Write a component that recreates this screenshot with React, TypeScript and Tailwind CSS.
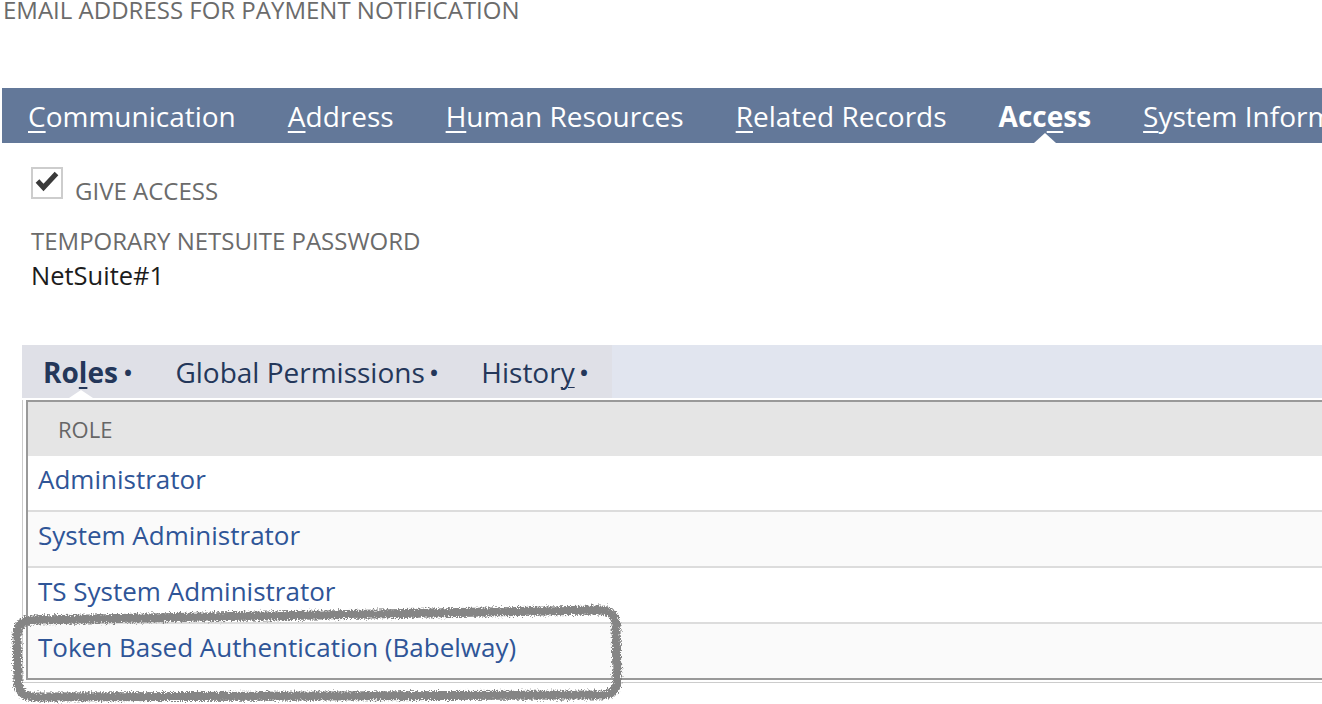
import React from "react";

const tabs: { pre: string; u: string; post: string; bold?: boolean }[] = [
  { pre: "", u: "C", post: "ommunication" },
  { pre: "", u: "A", post: "ddress" },
  { pre: "", u: "H", post: "uman Resources" },
  { pre: "", u: "R", post: "elated Records" },
  { pre: "Acc", u: "e", post: "ss", bold: true },
  { pre: "", u: "S", post: "ystem Information" },
];

const roles = [
  "Administrator",
  "System Administrator",
  "TS System Administrator",
  "Token Based Authentication (Babelway)",
];

export default function App() {
  return (
    <div
      className="relative w-[1322px] h-[704px] overflow-hidden bg-white flex flex-col"
      style={{ fontFamily: '"Open Sans", "Liberation Sans", sans-serif' }}
    >
      <div className="h-[20px] leading-[20px] pl-[3px] text-[24px] text-[#6b6b6b] whitespace-nowrap">
        EMAIL ADDRESS FOR PAYMENT NOTIFICATION
      </div>

      {/* Main tab bar */}
      <div className="mt-[68px] ml-[2px] h-[55px] bg-[#637899] flex items-start pl-[26px] gap-[52px] whitespace-nowrap overflow-hidden shrink-0">
        {tabs.map((t, i) => (
          <div
            key={i}
            className={`relative h-[55px] pt-[1px] leading-[55px] text-[28px] text-white ${t.bold ? "font-bold" : "font-normal"}`}
          >
            {t.pre}
            <span className="underline decoration-2 underline-offset-[4px]">{t.u}</span>
            {t.post}
            {t.bold && (
              <span className="absolute bottom-0 left-1/2 -translate-x-1/2 w-0 h-0 border-l-[11px] border-r-[11px] border-b-[10px] border-l-transparent border-r-transparent border-b-white" />
            )}
          </div>
        ))}
      </div>

      {/* Give access */}
      <div className="mt-[24px] ml-[31px] flex items-start">
        <div className="w-[32px] h-[32px] border-2 border-[#cdcdcd] bg-white shrink-0">
          <svg width="28" height="28" viewBox="0 0 28 28">
            <path d="M4.5 12 L10.5 18.5 L23.5 4.5" fill="none" stroke="#3a3a3a" strokeWidth="5" strokeLinejoin="miter" />
          </svg>
        </div>
        <div className="ml-[12px] mt-[12px] h-[24px] leading-[24px] text-[24px] text-[#6b6b6b] whitespace-nowrap">
          GIVE ACCESS
        </div>
      </div>

      <div className="mt-[26px] ml-[31px] h-[24px] leading-[24px] text-[24px] text-[#6b6b6b] whitespace-nowrap">
        TEMPORARY NETSUITE PASSWORD
      </div>
      <div className="mt-[10px] ml-[31px] h-[25px] leading-[25px] text-[25.5px] text-[#1c1c1c] whitespace-nowrap">
        NetSuite#1
      </div>

      {/* Subtabs */}
      <div className="mt-[57px] ml-[22px] h-[53px] flex shrink-0 whitespace-nowrap">
        <div className="flex bg-[#dfe0e7] h-[53px] text-[28px] text-[#24375a] leading-[53px] pt-[1px] pr-[2px]">
          <div className="relative px-[21px] font-bold">
            Ro<span className="underline decoration-2 underline-offset-[4px]">l</span>es
            <span className="font-normal ml-[5px]">•</span>
            <span className="absolute bottom-0 left-[47px] w-0 h-0 border-l-[12px] border-r-[12px] border-b-[8px] border-l-transparent border-r-transparent border-b-white" />
          </div>
          <div className="px-[21px]">
            Global Permissions<span className="ml-[4px]">•</span>
          </div>
          <div className="px-[21px]">
            Histor<span className="underline decoration-1 underline-offset-[4px]">y</span>
            <span className="ml-[4px]">•</span>
          </div>
        </div>
        <div className="flex-1 bg-[#e1e5ef] h-[53px]" />
      </div>

      {/* Table */}
      <div className="mt-[2px] ml-[22px] border-l border-b border-[#cccccc] pl-[3px] pb-[2px] shrink-0">
        <div className="border-t-2 border-l-2 border-b-2 border-[#999999]">
          <div className="h-[54px] bg-[#e5e5e5] flex items-center pl-[30px] text-[22px] text-[#666666]">
            ROLE
          </div>
          {roles.map((r, i) => (
            <div
              key={r}
              className={`${i === 0 ? "h-[54px]" : "h-[56px] border-t-2 border-[#dcdcdc]"} ${i % 2 === 1 ? "bg-[#fafafa]" : "bg-white"} pl-[10px] pt-[8px]`}
            >
              <div className="h-[30px] leading-[30px] text-[26px] text-[#2f5597] whitespace-nowrap">{r}</div>
            </div>
          ))}
        </div>
      </div>

      {/* Hand-drawn annotation */}
      <svg className="absolute left-0 top-0 pointer-events-none" width="1322" height="704" viewBox="0 0 1322 704">
        <defs>
          <filter id="rough" x="-5%" y="-20%" width="110%" height="140%">
            <feTurbulence type="fractalNoise" baseFrequency="0.7" numOctaves="3" seed="5" result="n" />
            <feDisplacementMap in="SourceGraphic" in2="n" scale="7" xChannelSelector="R" yChannelSelector="G" />
          </filter>
        </defs>
        <path
          d="M32 620 L598 610 Q616 610 616 626 L617 680 Q617 695 601 695 L36 697 Q18 697 18 681 L17 636 Q17 621 32 620 Z"
          fill="none"
          stroke="#858585"
          strokeWidth="9"
          filter="url(#rough)"
        />
      </svg>
    </div>
  );
}
